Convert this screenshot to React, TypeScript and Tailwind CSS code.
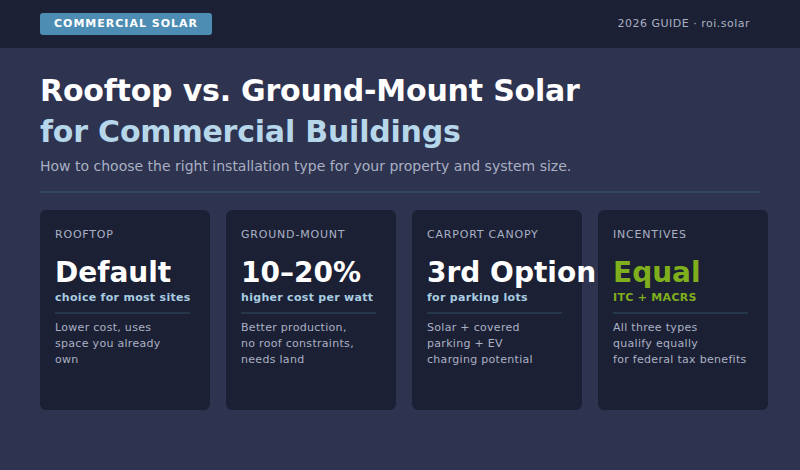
import React from "react";

const cards = [
  { label: "ROOFTOP", big: "Default", sub: "choice for most sites", desc: ["Lower cost, uses", "space you already", "own"], green: false },
  { label: "GROUND-MOUNT", big: "10–20%", sub: "higher cost per watt", desc: ["Better production,", "no roof constraints,", "needs land"], green: false },
  { label: "CARPORT CANOPY", big: "3rd Option", sub: "for parking lots", desc: ["Solar + covered", "parking + EV", "charging potential"], green: false },
  { label: "INCENTIVES", big: "Equal", sub: "ITC + MACRS", desc: ["All three types", "qualify equally", "for federal tax benefits"], green: true },
];

export default function App() {
  return (
    <div className="w-[800px] h-[470px] bg-[#2e3350] overflow-hidden" style={{ fontFamily: '"DejaVu Sans", sans-serif' }}>
      <div className="h-[48px] bg-[#1c2034] flex items-center justify-between px-[40px]">
        <div className="h-[22px] w-[172px] rounded-[3px] bg-[#4d8db3] flex items-center justify-center text-white text-[11px] font-bold tracking-[1px]">COMMERCIAL SOLAR</div>
        <div className="text-[11px] text-[#a9b0c2] tracking-[0.5px] pr-[10px]">2026 GUIDE · roi.solar</div>
      </div>
      <div className="px-[40px]">
        <div className="pt-[22px] text-[30px] font-bold text-white leading-[42px] tracking-[-0.2px] whitespace-nowrap">Rooftop vs. Ground-Mount Solar</div>
        <div className="text-[30px] font-bold text-[#b6d6ea] leading-[40px] tracking-[-0.2px]">for Commercial Buildings</div>
        <div className="text-[14px] text-[#a9b0c2] mt-[5px] leading-[18px]">How to choose the right installation type for your property and system size.</div>
        <div className="h-[2px] bg-[#2f4a60] mt-[16px]" />
        <div className="flex gap-[16px] mt-[17px]">
          {cards.map((c) => (
            <div key={c.label} className="h-[200px] w-[170px] shrink-0 rounded-[6px] bg-[#1c2034] px-[15px] pt-[18px]">
              <div className="text-[11px] text-[#aab1c4] tracking-[0.8px] leading-[14px]">{c.label}</div>
              <div className={`mt-[14px] text-[28px] font-bold leading-[34px] whitespace-nowrap ${c.green ? "text-[#7faf1c]" : "text-white"}`}>{c.big}</div>
              <div className={`mt-[1px] text-[11px] font-bold leading-[14px] tracking-[0.3px] ${c.green ? "text-[#7faf1c]" : "text-[#a8cce0]"}`}>{c.sub}</div>
              <div className="h-[2px] w-[135px] bg-[#26364b] mt-[7px]" />
              <div className="mt-[6px] text-[11px] text-[#aab1c4] leading-[16px] tracking-[0.3px]">
                {c.desc.map((d) => <div key={d}>{d}</div>)}
              </div>
            </div>
          ))}
        </div>
      </div>
    </div>
  );
}
